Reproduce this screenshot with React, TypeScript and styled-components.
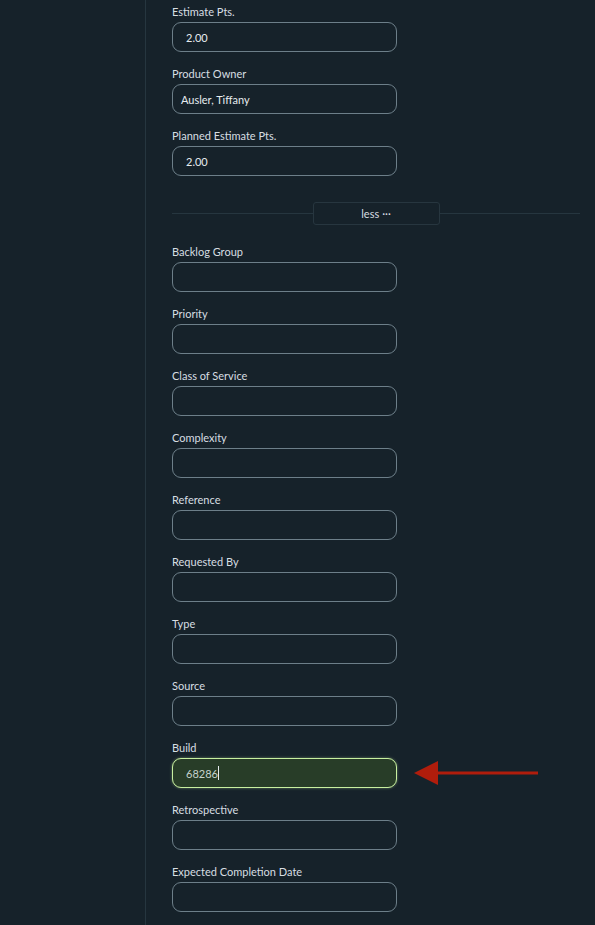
import React from "react";
import styled, { createGlobalStyle } from "styled-components";

const Global = createGlobalStyle`
  html, body { margin: 0; padding: 0; background: #16222a; }
  body { font-family: Lato, "Open Sans", sans-serif; }
`;

const Page = styled.div`
  display: flex;
  width: 595px;
  height: 925px;
  overflow: hidden;
  background: #16222a;
`;

const Sidebar = styled.div`
  width: 145px;
  flex: none;
  border-right: 1px solid #26363f;
`;

const Main = styled.div`
  flex: 1;
  padding: 4px 15px 0 26px;
  display: flex;
  flex-direction: column;
`;

const Field = styled.div`
  display: flex;
  flex-direction: column;
  margin-bottom: 14px;
`;

const Label = styled.label`
  font-size: 11px;
  line-height: 16px;
  color: #d7dee2;
  margin-bottom: 2px;
`;

const Row = styled.div`
  display: flex;
  align-items: center;
  position: relative;
`;

const Input = styled.div<{ $pad?: number; $active?: boolean }>`
  box-sizing: border-box;
  width: 225px;
  height: 30px;
  border-radius: 9px;
  border: 1px solid ${(p) => (p.$active ? "#c8f0a0" : "#6d7f89")};
  background: ${(p) => (p.$active ? "#283d28" : "transparent")};
  box-shadow: ${(p) => (p.$active ? "0 0 3px rgba(200,240,160,0.45)" : "none")};
  padding-left: ${(p) => p.$pad ?? 13}px;
  display: flex;
  align-items: center;
  font-size: 11px;
  color: ${(p) => (p.$active ? "#c5d2cc" : "#e6ecef")};
`;

const Caret = styled.span`
  display: inline-block;
  width: 1px;
  height: 14px;
  background: #e6ecef;
`;

const DividerRow = styled.div`
  display: flex;
  align-items: center;
  height: 23px;
  margin: 12px 0 19px;
`;

const Line = styled.div`
  flex: 1;
  height: 1px;
  background: #26363f;
`;

const LessButton = styled.div`
  box-sizing: border-box;
  width: 127px;
  height: 23px;
  border: 1px solid #27363f;
  border-radius: 3px;
  background: #16222a;
  color: #d7dee2;
  font-size: 11px;
  display: flex;
  align-items: center;
  justify-content: center;
  gap: 3px;
`;

const Arrow = styled.svg`
  position: absolute;
  left: 242px;
  top: 3px;
`;

type F = { label: string; value?: string; pad?: number; active?: boolean };

const top: F[] = [
  { label: "Estimate Pts.", value: "2.00" },
  { label: "Product Owner", value: "Ausler, Tiffany", pad: 8 },
  { label: "Planned Estimate Pts.", value: "2.00" },
];

const rest: F[] = [
  { label: "Backlog Group" },
  { label: "Priority" },
  { label: "Class of Service" },
  { label: "Complexity" },
  { label: "Reference" },
  { label: "Requested By" },
  { label: "Type" },
  { label: "Source" },
  { label: "Build", value: "68286", active: true },
  { label: "Retrospective" },
  { label: "Expected Completion Date" },
];

function FieldView({ f }: { f: F }) {
  return (
    <Field>
      <Label>{f.label}</Label>
      <Row>
        <Input $pad={f.pad} $active={f.active}>
          {f.value}
          {f.active && <Caret />}
        </Input>
        {f.active && (
          <Arrow width="124" height="24" viewBox="0 0 124 24">
            <rect x="20" y="10.5" width="104" height="3" fill="#b01d0c" />
            <polygon points="0,12 24,0 24,24" fill="#b01d0c" />
          </Arrow>
        )}
      </Row>
    </Field>
  );
}

export default function App() {
  return (
    <Page>
      <Global />
      <Sidebar />
      <Main>
        {top.map((f) => (
          <FieldView key={f.label} f={f} />
        ))}
        <DividerRow>
          <Line />
          <LessButton>
            less <span>···</span>
          </LessButton>
          <Line />
        </DividerRow>
        {rest.map((f) => (
          <FieldView key={f.label} f={f} />
        ))}
      </Main>
    </Page>
  );
}
